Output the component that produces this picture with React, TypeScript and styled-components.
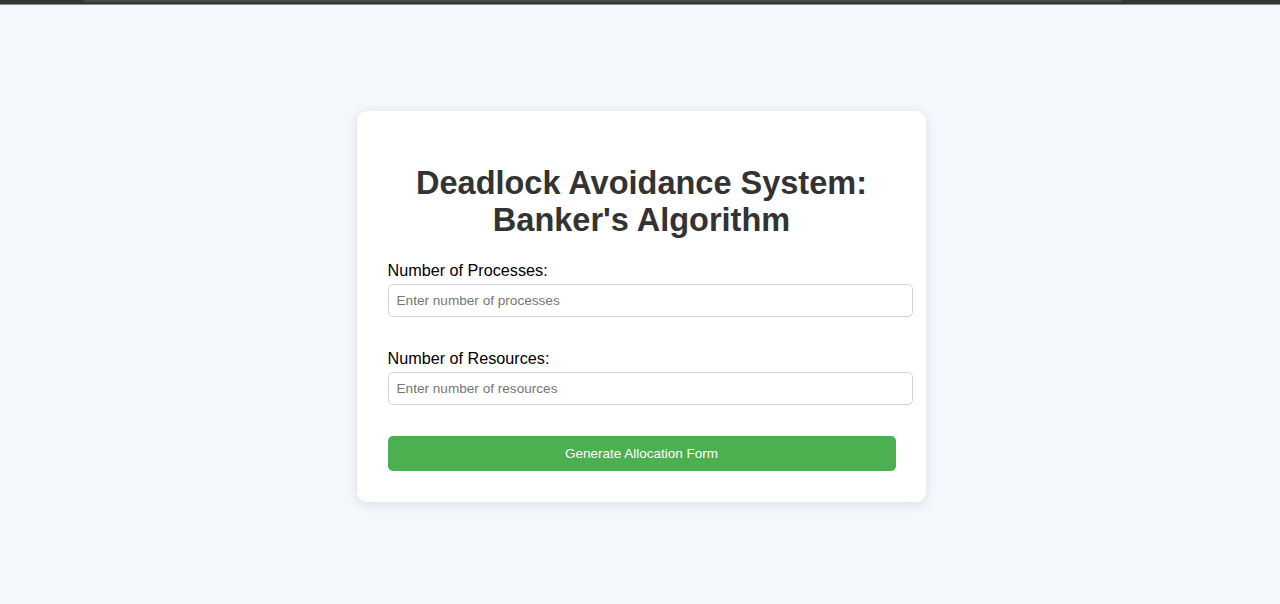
import React from "react";
import styled, { createGlobalStyle } from "styled-components";

const GlobalStyle = createGlobalStyle`
  html, body {
    margin: 0;
    padding: 0;
    background: #f4f7fb;
    font-family: "Liberation Sans", Arial, sans-serif;
  }
  * { box-sizing: border-box; }
`;

const TopBar = styled.div`
  height: 5px;
  background: #353535;
  border-bottom: 1px solid #8a8a8a;
  padding: 0 158px 0 84px;
`;

const TopStrip = styled.div`
  height: 2px;
  background: #4a4a4a;
  border-radius: 0 0 3px 3px;
`;

const Main = styled.main`
  min-height: 599px;
  display: flex;
  justify-content: center;
  align-items: flex-start;
  padding-top: 106px;
  padding-left: 2px;
`;

const Card = styled.div`
  width: 569px;
  background: #ffffff;
  border-radius: 10px;
  padding: 31px 30px 31px 31px;
  box-shadow: 0 2px 12px rgba(30, 45, 80, 0.12);
`;

const Title = styled.h1`
  margin: 23px 0 22px;
  font-size: 32.5px;
  line-height: 37px;
  font-weight: 700;
  color: #333333;
  text-align: center;
  padding: 0 8px;
`;

const Field = styled.div`
  display: flex;
  flex-direction: column;
  margin-bottom: 31.5px;
`;

const Label = styled.label`
  font-size: 16.2px;
  line-height: 18px;
  color: #000000;
  margin-bottom: 5px;
`;

const Input = styled.input`
  width: 525px;
  height: 33px;
  padding: 0 8px;
  font-family: "Liberation Sans", Arial, sans-serif;
  font-size: 13.6px;
  color: #333;
  border: 1px solid #d4d4d4;
  border-radius: 5px;
  background: #fff;
  outline: none;
  &::placeholder {
    color: #767676;
  }
`;

const Button = styled.button`
  width: 508px;
  height: 35px;
  border: none;
  border-radius: 5px;
  background: #4caf50;
  color: #ffffff;
  font-family: "Liberation Sans", Arial, sans-serif;
  font-size: 13.5px;
  cursor: pointer;
`;

export default function App() {
  return (
    <>
      <GlobalStyle />
      <TopBar>
        <TopStrip />
      </TopBar>
      <Main>
        <Card>
          <Title>Deadlock Avoidance System: Banker's Algorithm</Title>
          <Field>
            <Label htmlFor="processes">Number of Processes:</Label>
            <Input id="processes" type="number" placeholder="Enter number of processes" />
          </Field>
          <Field>
            <Label htmlFor="resources">Number of Resources:</Label>
            <Input id="resources" type="number" placeholder="Enter number of resources" />
          </Field>
          <Button type="button">Generate Allocation Form</Button>
        </Card>
      </Main>
    </>
  );
}
